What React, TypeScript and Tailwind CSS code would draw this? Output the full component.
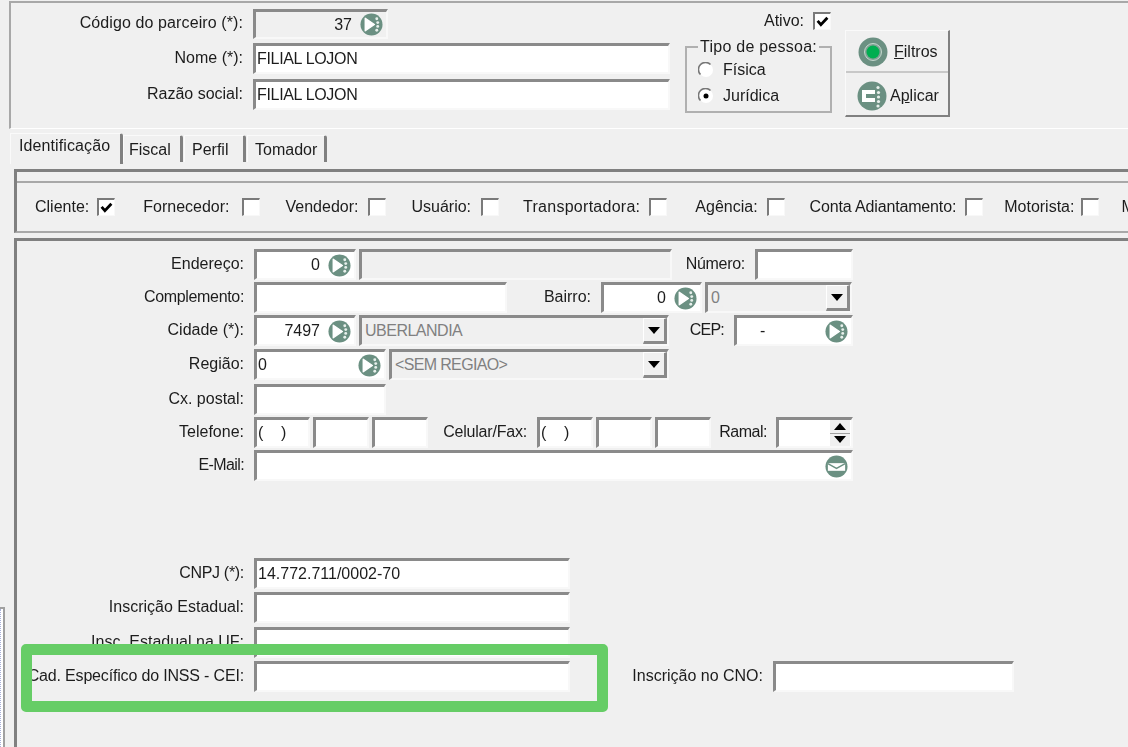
import React from 'react';

function GoIcon({ className = '' }: { className?: string }) {
  return (
    <svg viewBox="0 0 24 24" className={`w-[23px] h-[23px] shrink-0 ${className}`}>
      <circle cx="12" cy="12" r="11.5" fill="#6b9082" />
      <path d="M5.5 5.5 L15 12 L5.5 18.5 Z" fill="#fff" stroke="#fff" strokeWidth="1.5" strokeLinejoin="round" />
      <g fill="#e8f0ec">
        <circle cx="17.5" cy="6" r="1.5" />
        <circle cx="18.5" cy="10" r="1.5" />
        <circle cx="18.5" cy="14" r="1.5" />
        <circle cx="17.5" cy="18" r="1.5" />
      </g>
    </svg>
  );
}

function MailIcon() {
  return (
    <svg viewBox="0 0 24 24" className="w-[23px] h-[23px] shrink-0">
      <circle cx="12" cy="12" r="11.5" fill="#6b9082" />
      <path d="M3 8.5 H21 V16.5 H3 Z" fill="#fff" />
      <path d="M3 9 L12 14 L21 9" fill="none" stroke="#6b9082" strokeWidth="1.4" />
    </svg>
  );
}

function ApplyIcon() {
  return (
    <svg viewBox="0 0 30 30" className="w-[30px] h-[30px] shrink-0">
      <circle cx="15" cy="15" r="14.5" fill="#6b9082" />
      <path d="M5 9 H18 V13 H9 V17 H18 V21 H5 Z" fill="#fff" />
      <g fill="#e8f0ec">
        <circle cx="21" cy="6.5" r="1.6" />
        <circle cx="21.5" cy="11.5" r="1.6" />
        <circle cx="21.5" cy="16" r="1.6" />
        <circle cx="21.5" cy="20.5" r="1.6" />
        <circle cx="21" cy="25" r="1.6" />
      </g>
    </svg>
  );
}

function FilterIcon() {
  return (
    <svg viewBox="0 0 30 30" className="w-[30px] h-[30px] shrink-0">
      <circle cx="15" cy="15" r="14.5" fill="#6b9082" />
      <circle cx="15" cy="15" r="8.5" fill="#7fa294" stroke="#c4d6cd" strokeWidth="1" />
      <circle cx="15" cy="15" r="6.5" fill="#00ae50" />
    </svg>
  );
}

function Arrow({ up = false }: { up?: boolean }) {
  return (
    <svg viewBox="0 0 12 7" className="w-[12px] h-[7px]">
      <path d={up ? 'M0 7 L6 0 L12 7 Z' : 'M0 0 L12 0 L6 7 Z'} fill="#000" />
    </svg>
  );
}

function Field({ className = '', gray = false, children }: { className?: string; gray?: boolean; children?: React.ReactNode }) {
  return (
    <div
      className={`h-full flex items-center shrink-0 border-t-[3px] border-l-[3px] border-r-2 border-b-2 border-t-[#8a8a8a] border-l-[#8a8a8a] border-r-[#f8f8f8] border-b-[#f8f8f8] ${gray ? 'bg-[#f0f0f0]' : 'bg-white'} ${className}`}
    >
      {children}
    </div>
  );
}

function SelectField({ className = '', value }: { className?: string; value: string }) {
  return (
    <Field gray className={`pl-[3px] justify-between text-[#808080] ${className}`}>
      <span>{value}</span>
      <div className="w-[24px] h-full flex items-center justify-center border-r-[3px] border-b-[3px] border-r-[#8a8a8a] border-b-[#8a8a8a] border-l border-t border-l-white border-t-white">
        <Arrow />
      </div>
    </Field>
  );
}

function Label({ className = '', children }: { className?: string; children: React.ReactNode }) {
  return <span className={`shrink-0 flex items-center justify-end pb-[2px] whitespace-nowrap ${className}`}>{children}</span>;
}

function Check({ checked = false, className = '' }: { checked?: boolean; className?: string }) {
  return (
    <div className={`w-[18px] h-[18px] shrink-0 bg-white flex items-center justify-center border-t-2 border-l-2 border-t-[#7a7a7a] border-l-[#7a7a7a] border-r border-b border-r-[#f8f8f8] border-b-[#f8f8f8] ${className}`}>
      {checked && (
        <svg viewBox="0 0 12 12" className="w-[13px] h-[13px]">
          <path d="M1.5 5.5 L4.5 9 L10.5 2.5" fill="none" stroke="#000" strokeWidth="2.6" />
        </svg>
      )}
    </div>
  );
}

function Radio({ checked = false }: { checked?: boolean }) {
  return (
    <svg viewBox="0 0 16 16" className="w-[16px] h-[16px] shrink-0">
      <circle cx="8" cy="8" r="7" fill="#fff" />
      <path d="M2.5 12.5 A7 7 0 0 1 12.5 2.5" fill="none" stroke="#777" strokeWidth="1.6" />
      {checked && <circle cx="8" cy="8" r="2.5" fill="#000" />}
    </svg>
  );
}

function Tab({ label, active = false, className = '' }: { label: string; active?: boolean; className?: string }) {
  return (
    <div className={`flex items-center shrink-0 border-t border-l border-t-[#fafafa] border-l-[#fafafa] border-r-[3px] border-r-[#808080] rounded-tr-[3px] ${active ? 'h-[31px] pb-[6px]' : 'h-[27px] mt-[2px] pt-[1px]'} ${className}`}>
      {label}
    </div>
  );
}

function Row({ className = '', children }: { className?: string; children: React.ReactNode }) {
  return <div className={`flex items-stretch h-[31px] ${className}`}>{children}</div>;
}

const flags = [
  { label: 'Cliente:', checked: true, ml: 'ml-[18px]', box: 'ml-[8px]' },
  { label: 'Fornecedor:', ml: 'ml-[28px]', box: 'ml-[12px]' },
  { label: 'Vendedor:', ml: 'ml-[26px]', box: 'ml-[10px]' },
  { label: 'Usuário:', ml: 'ml-[25px]', box: 'ml-[10px]' },
  { label: 'Transportadora:', ml: 'ml-[24px] tracking-[0.27px]', box: 'ml-[9px]' },
  { label: 'Agência:', ml: 'ml-[28px]', box: 'ml-[9px]' },
  { label: 'Conta Adiantamento:', ml: 'ml-[25px] tracking-[-0.15px]', box: 'ml-[9px]' },
  { label: 'Motorista:', ml: 'ml-[21px]', box: 'ml-[7px]' },
];

export default function App() {
  return (
    <div className="relative w-[1128px] h-[747px] overflow-hidden bg-[#f0f0f0] text-[16px] text-[#1c1c1c] font-['Liberation_Sans',Arial,sans-serif]">
      <div className="flex w-full h-full blur-[0.4px]">
        {/* sliver of the window behind */}
        <div className="w-[9px] shrink-0 flex flex-col justify-end">
          <div className="w-[5px] h-[140px] bg-white border-t-2 border-r-2 border-[#a0a0a0]">
            <div className="w-px h-full border-l border-dotted border-[#a8b0d8]" />
          </div>
        </div>

        <div className="flex-1 min-w-0 flex flex-col">
          {/* header */}
          <div className="h-[128px] mt-[1px] shrink-0 flex border-t-2 border-l-2 border-t-[#a8a8a8] border-l-[#a8a8a8] border-b border-b-white">
            <div className="w-[661px] shrink-0 flex flex-col pt-[6px]">
              <Row className="!h-[30px]">
                <Label className="w-[232px] tracking-[0.1px]">Código do parceiro (*):</Label>
                <Field gray className="ml-[10px] w-[135px] justify-end pr-[3px]">
                  <span className="mr-[8px]">37</span>
                  <GoIcon />
                </Field>
              </Row>
              <Row className="mt-[4px]">
                <Label className="w-[232px]">Nome (*):</Label>
                <Field className="ml-[10px] w-[417px] pl-[1px] tracking-[-0.33px]">FILIAL LOJON</Field>
              </Row>
              <Row className="mt-[5px]">
                <Label className="w-[232px]">Razão social:</Label>
                <Field className="ml-[10px] w-[417px] pl-[1px] tracking-[-0.33px]">FILIAL LOJON</Field>
              </Row>
            </div>

            <div className="w-[147px] ml-[13px] shrink-0 flex flex-col">
              <div className="h-[20px] mt-[8px] flex items-center justify-end pr-[1px]">
                <span className="mr-[9px]">Ativo:</span>
                <Check checked />
              </div>
              <fieldset className="mt-[8px] h-[74px] border-2 border-[#b0b0b0] pl-[11px]">
                <legend className="px-[2px] leading-[16px] tracking-[0.25px]">Tipo de pessoa:</legend>
                <div className="flex items-center gap-[9px] h-[26px] mt-[2px]">
                  <Radio />
                  <span>Física</span>
                </div>
                <div className="flex items-center gap-[9px] h-[26px]">
                  <Radio checked />
                  <span>Jurídica</span>
                </div>
              </fieldset>
            </div>

            <div className="w-[105px] ml-[13px] shrink-0 mt-[27px] h-[87px] flex flex-col border-r-2 border-b-2 border-[#808080] border-t border-l border-t-[#fafafa] border-l-[#fafafa]">
              <div className="h-[42px] flex items-center pl-[12px] pt-[1px] border-b-2 border-b-[#c8c8c8] gap-[6px]">
                <FilterIcon />
                <span className="mt-[1px]">
                  <span className="underline">F</span>iltros
                </span>
              </div>
              <div className="flex-1 flex items-center pl-[11px] pt-[3px] gap-[3px]">
                <ApplyIcon />
                <span className="mt-[1px]">
                  A<span className="underline">p</span>licar
                </span>
              </div>
            </div>
          </div>

          {/* tabs */}
          <div className="flex h-[34px] mt-[4px] shrink-0 pl-[1px]">
            <Tab label="Identificação" active className="w-[113px] pl-[8px] tracking-[0.1px]" />
            <Tab label="Fiscal" className="w-[60px] pl-[5px]" />
            <Tab label="Perfil" className="w-[62px] ml-[1px] pl-[7px]" />
            <Tab label="Tomador" className="w-[80px] ml-[1px] pl-[7px]" />
          </div>

          {/* flags panel */}
          <div className="ml-[5px] mt-[2px] h-[64px] shrink-0 border-t-[3px] border-l-[3px] border-t-[#808080] border-l-[#808080] border-b-2 border-b-[#a8a8a8] flex flex-col overflow-hidden">
            <div className="h-[11px] shrink-0 border-b-2 border-b-[#a8a8a8]" />
            <div className="flex-1 flex items-center whitespace-nowrap">
              {flags.map((f) => (
                <React.Fragment key={f.label}>
                  <span className={f.ml}>{f.label}</span>
                  <Check checked={f.checked} className={f.box} />
                </React.Fragment>
              ))}
              <span className="ml-[22px]">M</span>
            </div>
          </div>

          {/* main form */}
          <div className="ml-[5px] mt-[5px] flex-1 border-t-[3px] border-l-[3px] border-t-[#808080] border-l-[#808080] pt-[8px]">
            <Row>
              <Label className="w-[227px]">Endereço:</Label>
              <Field className="ml-[10px] w-[102px] justify-end pr-[3px]">
                <span className="mr-[8px]">0</span>
                <GoIcon />
              </Field>
              <Field gray className="ml-[3px] w-[313px]" />
              <Label className="w-[73px] tracking-[-0.3px]">Número:</Label>
              <Field className="ml-[10px] w-[98px]" />
            </Row>
            <Row className="mt-[2px]">
              <Label className="w-[227px] tracking-[-0.33px]">Complemento:</Label>
              <Field className="ml-[10px] w-[253px]" />
              <Label className="w-[84px]">Bairro:</Label>
              <Field className="ml-[10px] w-[101px] justify-end pr-[3px]">
                <span className="mr-[8px]">0</span>
                <GoIcon />
              </Field>
              <SelectField value="0" className="ml-[3px] w-[147px]" />
            </Row>
            <Row className="mt-[2px]">
              <Label className="w-[227px]">Cidade (*):</Label>
              <Field className="ml-[10px] w-[102px] justify-end pr-[3px]">
                <span className="mr-[8px]">7497</span>
                <GoIcon />
              </Field>
              <SelectField value="UBERLANDIA" className="ml-[3px] w-[310px] tracking-[-0.5px]" />
              <Label className="w-[55px] tracking-[-0.8px]">CEP:</Label>
              <Field className="ml-[10px] w-[119px] justify-between pr-[3px]">
                <span className="ml-[23px]">-</span>
                <GoIcon />
              </Field>
            </Row>
            <Row className="mt-[3px]">
              <Label className="w-[227px]">Região:</Label>
              <Field className="ml-[10px] w-[132px] justify-between pl-[1px] pr-[3px]">
                <span>0</span>
                <GoIcon />
              </Field>
              <SelectField value="<SEM REGIAO>" className="ml-[3px] w-[280px] tracking-[-0.65px]" />
            </Row>
            <Row className="mt-[4px]">
              <Label className="w-[227px]">Cx. postal:</Label>
              <Field className="ml-[10px] w-[132px]" />
            </Row>
            <Row className="mt-[2px]">
              <Label className="w-[227px]">Telefone:</Label>
              <Field className="ml-[10px] w-[56px] pl-[1px]">(&nbsp;&nbsp;&nbsp;&nbsp;)</Field>
              <Field className="ml-[3px] w-[56px]" />
              <Field className="ml-[3px] w-[56px]" />
              <Label className="w-[99px] tracking-[-0.2px]">Celular/Fax:</Label>
              <Field className="ml-[10px] w-[56px] pl-[1px]">(&nbsp;&nbsp;&nbsp;&nbsp;)</Field>
              <Field className="ml-[3px] w-[56px]" />
              <Field className="ml-[3px] w-[56px]" />
              <Label className="w-[56px] tracking-[-0.5px]">Ramal:</Label>
              <Field className="ml-[9px] w-[77px] justify-end pr-[1px]">
                <div className="w-[20px] h-full flex flex-col">
                  <div className="flex-1 flex items-center justify-center border-b border-[#a0a0a0] bg-[#f0f0f0]">
                    <Arrow up />
                  </div>
                  <div className="flex-1 flex items-center justify-center bg-[#f0f0f0]">
                    <Arrow />
                  </div>
                </div>
              </Field>
            </Row>
            <Row className="mt-[2px]">
              <Label className="w-[227px] tracking-[-0.6px]">E-Mail:</Label>
              <Field className="ml-[10px] w-[599px] justify-end pr-[3px]">
                <MailIcon />
              </Field>
            </Row>
            <Row className="mt-[77px]">
              <Label className="w-[227px] tracking-[-0.3px]">CNPJ (*):</Label>
              <Field className="ml-[10px] w-[316px] pl-[1px]">14.772.711/0002-70</Field>
            </Row>
            <Row className="mt-[3px]">
              <Label className="w-[227px]">Inscrição Estadual:</Label>
              <Field className="ml-[10px] w-[316px]" />
            </Row>
            <Row className="mt-[4px]">
              <Label className="w-[227px]">Insc. Estadual na UF:</Label>
              <Field className="ml-[10px] w-[316px]" />
            </Row>
            <Row className="mt-[3px]">
              <Label className="w-[227px] tracking-[-0.17px]">Cad. Específico do INSS - CEI:</Label>
              <Field className="ml-[10px] w-[316px]" />
              <Label className="w-[193px]">Inscrição no CNO:</Label>
              <Field className="ml-[10px] w-[241px]" />
            </Row>
          </div>
        </div>
      </div>

      {/* annotation over the screenshot */}
      <div className="absolute left-[21px] top-[644px] w-[587px] h-[68px] border-[11px] border-[#66cd66] rounded-[5px] pointer-events-none" />
    </div>
  );
}
